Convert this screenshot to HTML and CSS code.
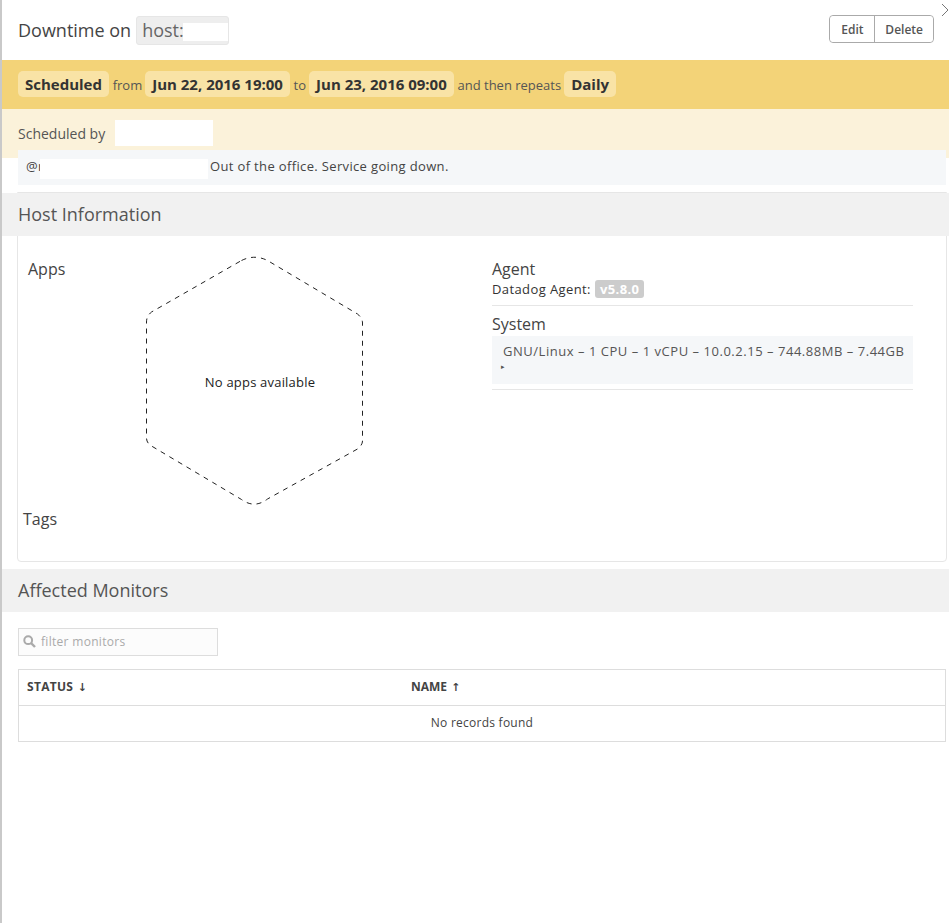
FILE: index.html
```html
<!DOCTYPE html>
<html lang="en">
<head>
<meta charset="utf-8">
<title>Downtime</title>
<link rel="stylesheet" href="styles.css">
</head>
<body>
<main class="panel">
  <button class="close" aria-label="Close"><svg width="8" height="14" viewBox="0 0 8 14"><path d="M1 1l6 6-6 6" fill="none" stroke="#777" stroke-width="1"/></svg></button>
  <header class="head">
    <h1 class="title">Downtime on <span class="scope">host:<span class="mask mask-host"></span></span></h1>
    <div class="actions"><button class="btn btn-edit">Edit</button><button class="btn">Delete</button></div>
  </header>
  <div class="schedule">
    <b class="pill">Scheduled</b><span class="word">from</span><b class="pill">Jun 22, 2016 19:00</b><span class="word">to</span><b class="pill">Jun 23, 2016 09:00</b><span class="word">and then repeats</span><b class="pill">Daily</b>
  </div>
  <div class="byline"><span class="byline-text">Scheduled by</span><span class="mask mask-by"></span></div>
  <div class="message"><span class="mention">@r</span><span class="mask mask-msg"></span><span>Out of the office. Service going down.</span></div>

  <section class="hostcard">
    <h2 class="section-title">Host Information</h2>
    <div class="host-body">
      <div class="apps">
        <h3 class="sub apps-label">Apps</h3>
        <div class="hex">
          <svg width="220" height="250" viewBox="0 0 220 250"><path d="M95 3.500Q108 -3 121 3.500L211 57Q216 61 216 66V184Q216 188 211 192L121 242Q108 252 95 242.500L5 189Q0 186 0 181V65Q0 59 5 55Z" transform="translate(0.5 1)" fill="none" stroke="#222" stroke-width="1" stroke-dasharray="5 5"/></svg>
          <span class="hex-text">No apps available</span>
        </div>
        <h3 class="sub tags-label">Tags</h3>
      </div>
      <div class="info">
        <div class="info-block agent">
          <h3 class="sub">Agent</h3>
          <div class="agent-line">Datadog Agent: <span class="version">v5.8.0</span></div>
        </div>
        <div class="info-block system">
          <h3 class="sub">System</h3>
          <div class="sysbox">
            <div>GNU/Linux – 1 CPU – 1 vCPU – 10.0.2.15 – 744.88MB – 7.44GB</div>
            <div class="caret">▸</div>
          </div>
        </div>
      </div>
    </div>
  </section>

  <section class="monitors">
    <h2 class="section-title section-title-flat">Affected Monitors</h2>
    <div class="filter">
      <svg width="13" height="13" viewBox="0 0 13 13"><circle cx="5.200" cy="5.200" r="3.900" fill="none" stroke="#aaa" stroke-width="2"/><path d="M8 8l4 4" stroke="#aaa" stroke-width="2.400"/></svg>
      <span>filter monitors</span>
    </div>
    <div class="table">
      <div class="thead"><span class="th th-status">STATUS <span class="arrow">↓</span></span><span class="th">NAME <span class="arrow">↑</span></span></div>
      <div class="empty">No records found</div>
    </div>
  </section>
</main>
</body>
</html>
```
FILE: styles.css
```css
* { box-sizing: border-box; }
html, body { margin: 0; padding: 0; height: 100%; }
body { background: #fff; overflow: hidden; font-family: "Open Sans", sans-serif; color: #4a4a4a; }
h1, h2, h3 { margin: 0; font-weight: 400; }

.panel { position: relative; height: 923px; border-left: 2px solid #c9c9c9; background: #fff; }
.close { position: absolute; top: 2px; right: 0; width: 8px; height: 16px; padding: 0; border: 0; background: none; line-height: 0; }

.head { height: 60px; display: flex; justify-content: space-between; align-items: flex-start; padding: 15px 15px 0 16px; }
.title { display: flex; align-items: center; font-size: 18px; line-height: 30px; color: #444; gap: 5px; }
.scope { display: flex; width: 93px; height: 29px; padding-left: 5px; align-items: center; background: #eee; border-radius: 3px; border: 1px solid #e6e6e6; color: #666; overflow: hidden; position: relative; }
.mask { display: block; background: #fff; }
.mask-host { position: absolute; left: 46px; top: 6px; width: 46px; height: 18px; }
.actions { display: flex; border: 1px solid #aaa; border-radius: 4px; height: 28px; }
.btn { height: 26px; padding: 0 10px; border: 0; background: #fff; font: 600 12px "Open Sans", sans-serif; color: #555; border-radius: 4px; }
.btn-edit { padding: 0; width: 44px; }
.btn + .btn { border-left: 1px solid #aaa; border-radius: 0 4px 4px 0; }

.schedule { height: 49px; background: #f3d378; display: flex; align-items: center; padding: 0 0 1px 16px; color: #555; font-size: 13px; }
.pill { height: 26px; line-height: 26px; padding: 0 7px; background: #f9e3a6; border-radius: 5px; font-weight: 700; font-size: 15px; color: #333; }
.word { margin: 2px 3px 0 3.700px; }

.byline { height: 49px; background: #fbf2da; padding: 11px 0 0 16px; display: flex; gap: 10px; font-size: 14px; color: #555; line-height: 26px; }
.byline-text { padding-top: 1px; }
.mask-by { width: 98px; height: 26px; }

.message { position: relative; margin: -8px 3px 0 16px; height: 35px; background: #f5f7f9; display: flex; align-items: center; padding: 0 0 4px 8px; font-size: 13px; letter-spacing: 0.35px; color: #444; }
.mention { width: 14px; flex: none; white-space: nowrap; }
.mask-msg { width: 168px; height: 20px; margin: 7px 2px 0 0; }

.hostcard { margin: 7px 2px 0 15px; height: 370px; border: 1px solid #e6e6e6; border-radius: 0 0 4px 4px; }
.section-title { height: 43px; margin: 0 -3px 0 -16px; padding-left: 16px; background: #f1f1f1; font-size: 18px; line-height: 43px; color: #555; }
.section-title-flat { margin: 0; }
.host-body { display: flex; }
.apps { width: 458px; flex: none; position: relative; }
.sub { font-size: 16px; line-height: 22px; color: #444; }
.apps-label { position: absolute; left: 10px; top: 22px; }
.tags-label { position: absolute; left: 5px; top: 272px; }
.hex { position: absolute; left: 128px; top: 20px; width: 220px; height: 250px; }
.hex svg { display: block; }
.hex-text { position: absolute; left: 0; right: 0; top: 117px; padding-left: 8px; text-align: center; font-size: 13px; letter-spacing: 0.2px; line-height: 18px; color: #222; }
.info { width: 421px; margin-left: 16px; padding-top: 22px; }
.info-block { border-bottom: 1px solid #e6e6e6; }
.agent { height: 48px; }
.sysbox { margin-top: 1px; height: 48px; margin-bottom: 5px; background: #f5f7f9; padding: 7px 0 0 11px; font-size: 13px; line-height: 17px; letter-spacing: 0.53px; color: #555; white-space: nowrap; }
.agent-line { font-size: 13px; line-height: 15px; letter-spacing: 0.4px; color: #333; display: flex; gap: 4px; align-items: center; }
.version { height: 18px; padding: 0 5px; background: #ccc; border-radius: 3px; color: #fff; font-weight: 700; font-size: 13px; line-height: 18px; }
.system { margin-top: 7px; }
.caret { margin-left: -2px; font-size: 7px; line-height: 14px; color: #555; }

.monitors { margin-top: 7px; }
.filter { margin: 16px 0 0 16px; width: 200px; height: 28px; border: 1px solid #ddd; background: #fcfcfc; display: flex; align-items: center; gap: 5px; padding: 0 0 2px 4px; font-size: 12px; letter-spacing: 0.3px; color: #aaa; }
.table { margin: 13px 3px 0 16px; border: 1px solid #ddd; font-size: 12px; }
.thead { height: 36px; display: flex; align-items: center; padding: 0 0 2px 8px; border-bottom: 1px solid #ddd; }
.th { font-weight: 700; color: #444; font-size: 12px; }
.th-status { width: 384px; letter-spacing: 0.3px; }
.arrow { font-family: "DejaVu Sans", sans-serif; font-size: 11px; margin-left: 1px; }
.empty { height: 35px; line-height: 34px; text-align: center; color: #444; font-size: 12px; letter-spacing: 0.25px; }
```
